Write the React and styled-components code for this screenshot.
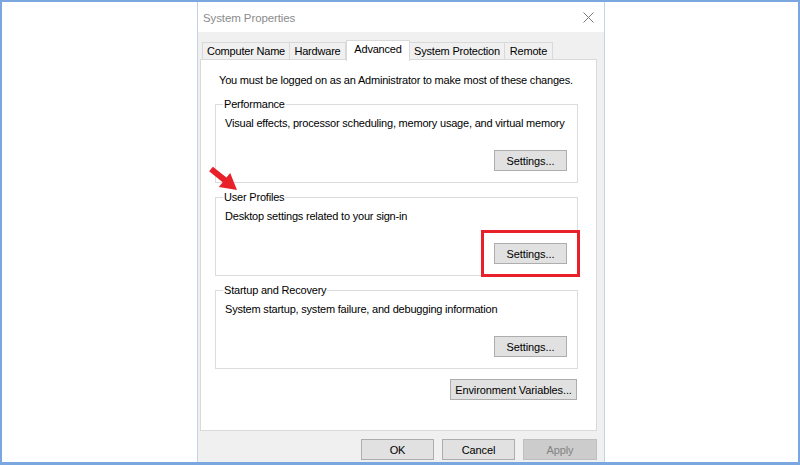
import React from 'react'
import styled, { createGlobalStyle } from 'styled-components'

const Global = createGlobalStyle`
  html, body { margin: 0; padding: 0; background: #fff; }
  body { font-family: "Liberation Sans", Arial, sans-serif; }
  * { box-sizing: border-box; }
`

const tabs = [
  { label: 'Computer Name', w: 88 },
  { label: 'Hardware', w: 56 },
  { label: 'Advanced', w: 64, active: true },
  { label: 'System Protection', w: 95 },
  { label: 'Remote', w: 48 },
]

const groups = [
  { title: 'Performance', text: 'Visual effects, processor scheduling, memory usage, and virtual memory' },
  { title: 'User Profiles', text: 'Desktop settings related to your sign-in', marked: true },
  { title: 'Startup and Recovery', text: 'System startup, system failure, and debugging information' },
]

function Arrow() {
  return (
    <ArrowWrap width="31" height="26" viewBox="0 0 31 26">
      <path
        d="M4.89 0.67 L18.44 11.61 L22.21 6.94 L29 24 L10.89 20.94 L14.66 16.27 L1.11 5.33 Z"
        fill="#e8202a"
      />
    </ArrowWrap>
  )
}

export default function App() {
  return (
    <Frame>
      <Global />
      <Dialog>
        <TitleBar>
          <Title>System Properties</Title>
          <svg width="11" height="11" viewBox="0 0 11 11">
            <path d="M0.5 0.5 L10.5 10.5 M10.5 0.5 L0.5 10.5" stroke="#7a7a7a" strokeWidth="1" />
          </svg>
        </TitleBar>
        <Body>
          <Tabs>
            {tabs.map((t) => (
              <Tab key={t.label} $w={t.w} $active={t.active}>{t.label}</Tab>
            ))}
          </Tabs>
          <Panel>
            <Notice>You must be logged on as an Administrator to make most of these changes.</Notice>
            {groups.map((g) => (
              <Group key={g.title}>
                <Legend>{g.title}</Legend>
                {g.marked && <Arrow />}
                <Desc>{g.text}</Desc>
                <ButtonRow>
                  <Button $w={73} $marked={g.marked}>Settings...</Button>
                </ButtonRow>
              </Group>
            ))}
            <EnvRow>
              <Button $w={127}>Environment Variables...</Button>
            </EnvRow>
          </Panel>
          <Footer>
            <Button $w={73}>OK</Button>
            <Button $w={73}>Cancel</Button>
            <Button $w={74} disabled>Apply</Button>
          </Footer>
        </Body>
      </Dialog>
    </Frame>
  )
}

const Frame = styled.div`
  width: 800px;
  height: 465px;
  border: 2px solid #7ba7e1;
  border-bottom-width: 3px;
  padding-left: 195px;
  overflow: hidden;
  display: flex;
  align-items: flex-start;
`
const Dialog = styled.div`
  width: 408px;
  height: 470px;
  border: 1px solid #c6d3e7;
  border-top: none;
  background: #f0f0f0;
  display: flex;
  flex-direction: column;
`
const TitleBar = styled.div`
  height: 30px;
  background: #fff;
  display: flex;
  align-items: center;
  justify-content: space-between;
  padding: 0 10px 0 5px;
`
const Title = styled.span`
  font-size: 11.5px;
  letter-spacing: -0.1px;
  color: #8c8c8c;
  padding-top: 1px;
`
const Body = styled.div`
  padding: 7px 7px 0 2px;
  display: flex;
  flex-direction: column;
  font-size: 11px;
  letter-spacing: -0.2px;
  white-space: nowrap;
`
const Tabs = styled.div`
  display: flex;
  align-items: flex-end;
  height: 21px;
  padding-left: 2px;
  position: relative;
  z-index: 1;
`
const Tab = styled.div`
  width: ${(p) => p.$w}px;
  height: ${(p) => (p.$active ? 21 : 18)}px;
  margin-bottom: ${(p) => (p.$active ? -1 : 0)}px;
  border: 1px solid #d9d9d9;
  border-bottom: ${(p) => (p.$active ? 'none' : '1px solid #d9d9d9')};
  border-left: ${(p) => (p.$active ? '1px solid #d9d9d9' : 'none')};
  &:first-child { border-left: 1px solid #d9d9d9; }
  background: ${(p) => (p.$active ? '#fff' : '#f0f0f0')};
  color: #000;
  display: flex;
  align-items: ${(p) => (p.$active ? 'flex-start' : 'center')};
  padding-top: ${(p) => (p.$active ? 2 : 0)}px;
  justify-content: center;
`
const Panel = styled.div`
  height: 372px;
  background: #fff;
  border: 1px solid #d9d9d9;
  margin-top: -1px;
  padding: 13px 18px 0 14px;
  display: flex;
  flex-direction: column;
`
const Notice = styled.div`
  line-height: 15px;
  padding-left: 4px;
  margin-bottom: 9px;
`
const Group = styled.fieldset`
  position: relative;
  margin: 0;
  border: 1px solid #dcdcdc;
  padding: 4px 10px 11px 9px;
  min-width: 0;
  & + & { margin-top: 7px; }
`
const Legend = styled.legend`
  line-height: 15px;
  padding: 0 1px;
  margin-left: -2px;
`
const ArrowWrap = styled.svg`
  position: absolute;
  left: -8px;
  top: -39px;
`
const Desc = styled.div`
  line-height: 15px;
`
const ButtonRow = styled.div`
  display: flex;
  justify-content: flex-end;
  margin-top: 19px;
`
const Button = styled.button`
  width: ${(p) => p.$w}px;
  height: 21px;
  padding: 0;
  background: ${(p) => (p.disabled ? '#cccccc' : '#e1e1e1')};
  border: 1px solid ${(p) => (p.disabled ? '#bfbfbf' : '#adadad')};
  color: ${(p) => (p.disabled ? '#838383' : '#000')};
  font-family: "Liberation Sans", Arial, sans-serif;
  font-size: 11px;
  letter-spacing: -0.1px;
  white-space: nowrap;
  outline: ${(p) => (p.$marked ? '3px solid #e8202a' : 'none')};
  outline-offset: 10px;
`
const EnvRow = styled.div`
  display: flex;
  justify-content: flex-end;
  margin-top: 10px;
  padding-right: 1px;
`
const Footer = styled.div`
  display: flex;
  justify-content: flex-end;
  gap: 8px;
  margin-top: 8px;
`
